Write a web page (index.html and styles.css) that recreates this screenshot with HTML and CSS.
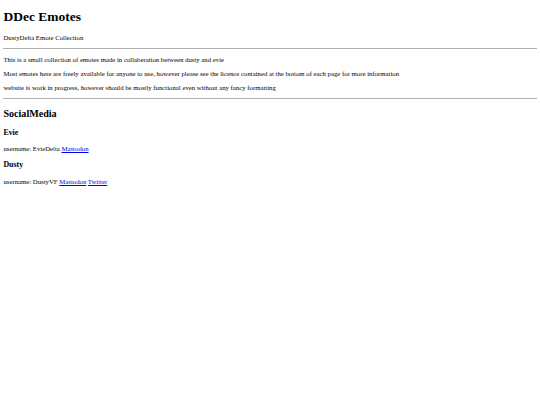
FILE: index.html
```html
<!DOCTYPE html>
<html lang="en">
<head>
    <meta charset="UTF-8">
    <meta name="viewport" content="width=device-width, initial-scale=1.0">
    <title>DDec Emotes</title>
    <link rel="stylesheet" href="styles.css">
</head>
<body>

    <h1>DDec Emotes</h1>
    <p>DustyDelta Emote Collection</p>
    <hr>
    <p>This is a small collection of emotes made in collaberation between dusty and evie</p>
    <p>Most emotes here are freely available for anyone to use, however please see the licence contained at the bottom of each page for more information</p>
    <p>website is work in progress, however should be mostly functional even without any fancy formatting</p>
    <hr>

    <h2>SocialMedia</h2>
    <h3>Evie</h3>
    <p>username: EvieDelta <a href="#">Mastodon</a></p>
    <h3>Dusty</h3>
    <p>username: DustyVF <a href="#">Mastodon</a> <a href="#">Twitter</a></p>

</body>
</html>
```

FILE: styles.css
```css
body {
    font-family: "Liberation Serif", "Times New Roman", serif;
    font-size: 6.75px;
    margin: 3.4px;
    color: #000;
    background: #fff;
}
h1 {
    font-size: 13.5px;
    margin: 6px 0 9px;
}
h2 {
    font-size: 10.1px;
    margin: 8.6px 0;
}
h3 {
    font-size: 7.9px;
    margin: 8.4px 0;
}
p {
    margin: 7px 0;
}
hr {
    border: none;
    border-top: 1px solid #b0b0b0;
    margin: 3.4px 0;
}
a {
    color: #0000ee;
}
```
